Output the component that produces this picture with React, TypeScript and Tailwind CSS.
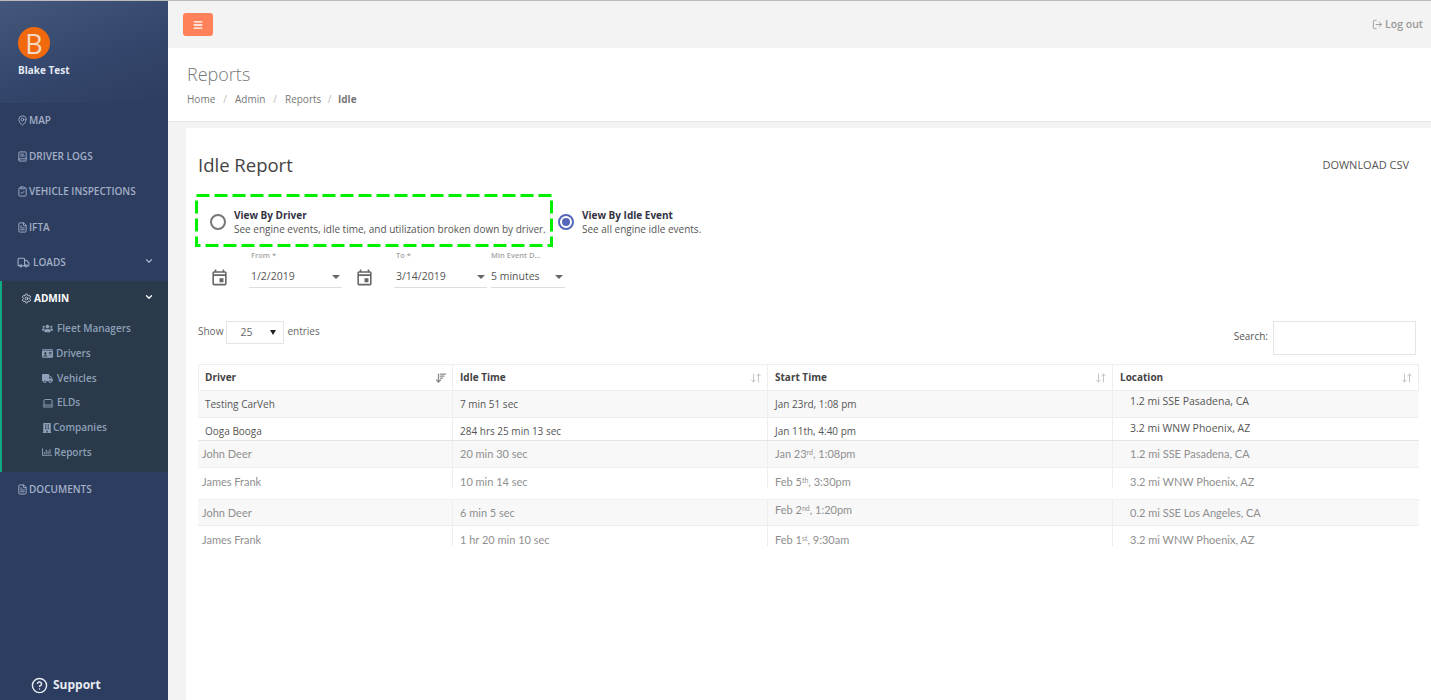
import type { ReactNode } from 'react';
import {
  ArrowDownUp,
  ArrowDownWideNarrow,
  BookText,
  ChevronDown,
  CircleHelp,
  ClipboardCheck,
  FileText,
  Laptop,
  LogOut,
  MapPin,
  Settings,
  Truck,
} from 'lucide-react';
import { FaBars, FaBuilding, FaIdCard, FaRegChartBar, FaTruck, FaUsers } from 'react-icons/fa';
import { MdOutlineEvent } from 'react-icons/md';

const NAV = [
  { label: 'MAP', icon: <MapPin size={11} /> },
  { label: 'DRIVER LOGS', icon: <BookText size={11} /> },
  { label: 'VEHICLE INSPECTIONS', icon: <ClipboardCheck size={11} /> },
  { label: 'IFTA', icon: <FileText size={11} /> },
];

const SUB = [
  { label: 'Fleet Managers', icon: <FaUsers size={11} />, gap: 'gap-[4px]' },
  { label: 'Drivers', icon: <FaIdCard size={11} />, gap: 'gap-[3px]' },
  { label: 'Vehicles', icon: <FaTruck size={11} />, gap: 'gap-[4px]' },
  { label: 'ELDs', icon: <Laptop size={12} />, gap: 'gap-[3px]' },
  { label: 'Companies', icon: <FaBuilding size={10} />, gap: 'gap-[1px]' },
  { label: 'Reports', icon: <FaRegChartBar size={10} />, gap: 'gap-[2px]' },
];

function NavItem({ icon, label, chevron }: { icon: ReactNode; label: string; chevron?: boolean }) {
  return (
    <div className="flex h-[35.5px] items-center gap-[1px] pl-[17px] pr-[14px] text-[10px] font-semibold text-[#a2afc6]">
      {icon}
      <span>{label}</span>
      {chevron && <ChevronDown size={10} strokeWidth={3} className="mb-[4px] ml-auto" />}
    </div>
  );
}

function Sidebar() {
  return (
    <aside className="flex h-full w-[168px] shrink-0 flex-col bg-[#2d3d60]">
      <div className="h-[102px] bg-[linear-gradient(160deg,#43587c_0%,#34466b_55%,#2d3d60_100%)] pl-[18px] pt-[26px]">
        <div className="flex h-[32px] w-[32px] items-center justify-center rounded-full bg-[#f2690d] text-[27px] leading-none text-[#f5d9c3]">
          B
        </div>
        <div className="mt-[4px] text-[10px] font-bold text-[#e3e9f3]">Blake Test</div>
      </div>
      {NAV.map((n) => (
        <NavItem key={n.label} icon={n.icon} label={n.label} />
      ))}
      <NavItem icon={<Truck size={13} className="mr-[2px]" />} label="LOADS" chevron />
      <div className="h-[191px] border-l-2 border-[#12a886] bg-[#2a3a4a]">
        <div className="flex h-[36px] items-center gap-[2px] pl-[19px] pr-[14px] text-[10px] font-bold text-white">
          <Settings size={11} className="text-[#c9d1de]" />
          <span>ADMIN</span>
          <ChevronDown size={10} strokeWidth={3} className="mb-[4px] ml-auto" />
        </div>
        <div>
          {SUB.map((s) => (
            <div
              key={s.label}
              className={`flex h-[24.7px] items-center pl-[40px] text-[10px] font-semibold text-[#8ea0b8] ${s.gap}`}
            >
              {s.icon}
              <span>{s.label}</span>
            </div>
          ))}
        </div>
      </div>
      <NavItem icon={<FileText size={11} />} label="DOCUMENTS" />
      <div className="mt-auto flex items-center gap-[5px] pb-[6px] pl-[31px] text-[12px] font-bold text-[#e6ebf3]">
        <CircleHelp size={17} />
        <span>Support</span>
      </div>
    </aside>
  );
}

function Radio({ checked }: { checked?: boolean }) {
  return (
    <span
      className={`flex h-[16px] w-[16px] shrink-0 items-center justify-center rounded-full border-2 ${
        checked ? 'border-[#5566bb]' : 'border-[#777777]'
      }`}
    >
      {checked && <span className="h-[8px] w-[8px] rounded-full bg-[#5566bb]" />}
    </span>
  );
}

function DateField({ label, value, width, labelPad }: { label: string; value: string; width: string; labelPad: string }) {
  return (
    <div className={`${width} shrink-0`}>
      <div className={`h-[16px] text-[7.5px] font-semibold leading-[6px] text-[#a5a5a5] ${labelPad}`}>{label}</div>
      <div className={`flex h-[20px] items-center justify-between border-b border-[#dddddd] pb-[2px] pr-[2px] text-[10.5px] text-[#555555] ${labelPad}`}>
        <span>{value}</span>
        <span className="h-0 w-0 border-x-[4px] border-t-[4px] border-x-transparent border-t-[#666666]" />
      </div>
    </div>
  );
}

const COLS = 'grid grid-cols-[255px_315px_345px_306px]';

function Sup({ children }: { children: ReactNode }) {
  return <sup className="text-[7px]">{children}</sup>;
}

type Row = {
  cells: ReactNode[];
  height: string;
  tone: string;
  old?: boolean;
  top?: string;
};

const ROWS: Row[] = [
  {
    cells: ['Testing CarVeh', '7 min 51 sec', 'Jan 23rd, 1:08 pm', '1.2 mi SSE Pasadena, CA'],
    height: 'h-[27px]',
    tone: 'bg-[#f8f8f8] border-b border-[#eeeeee]',
  },
  {
    cells: ['Ooga Booga', '284 hrs 25 min 13 sec', 'Jan 11th, 4:40 pm', '3.2 mi WNW Phoenix, AZ'],
    height: 'h-[23px]',
    tone: 'bg-white border-b border-[#e4e4e4]',
  },
  {
    cells: [
      'John Deer',
      '20 min 30 sec',
      <>Jan 23<Sup>rd</Sup>, 1:08pm</>,
      '1.2 mi SSE Pasadena, CA',
    ],
    height: 'h-[27px]',
    tone: 'bg-[#f8f8f8] border-b border-[#eeeeee]',
    old: true,
    top: 'pt-[5px]',
  },
  {
    cells: ['James Frank', '10 min 14 sec', <>Feb 5<Sup>th</Sup>, 3:30pm</>, '3.2 mi WNW Phoenix, AZ'],
    height: 'h-[20px] mb-[11px]',
    tone: 'bg-white',
    old: true,
    top: 'pt-[6px]',
  },
  {
    cells: ['John Deer', '6 min 5 sec', <>Feb 2<Sup>nd</Sup>, 1:20pm</>, '0.2 mi SSE Los Angeles, CA'],
    height: 'h-[27px]',
    tone: 'bg-[#f8f8f8] border-y border-[#eeeeee]',
    old: true,
    top: 'pt-[5px]',
  },
  {
    cells: ['James Frank', '1 hr 20 min 10 sec', <>Feb 1<Sup>st</Sup>, 9:30am</>, '3.2 mi WNW Phoenix, AZ'],
    height: 'h-[20px]',
    tone: 'bg-white',
    old: true,
    top: 'pt-[6px]',
  },
];

function ReportTable() {
  const headers = ['Driver', 'Idle Time', 'Start Time', 'Location'];
  return (
    <div className="w-[1221px]">
      <div className={`${COLS} h-[27px] border-y border-[#eeeeee] text-[10px] font-bold text-[#444444]`}>
        {headers.map((h, i) => (
          <div
            key={h}
            className={`flex items-center justify-between border-r border-[#eeeeee] pr-[5px] first:border-l ${
              i === 0 ? 'pl-[6px]' : 'pl-[7px]'
            }`}
          >
            <span>{h}</span>
            {i === 0 ? (
              <ArrowDownWideNarrow size={12} strokeWidth={2.5} className="text-[#888888]" />
            ) : (
              <ArrowDownUp size={12} className="text-[#c4c4c4]" />
            )}
          </div>
        ))}
      </div>
      {ROWS.map((r, idx) => (
        <div key={idx} className={`${COLS} ${r.height} ${r.tone} overflow-hidden`}>
          {r.cells.map((c, i) => (
            <div
              key={i}
              className={`overflow-hidden border-[#eeeeee] whitespace-nowrap ${i < 3 ? 'border-r' : ''} ${
                r.old
                  ? `${r.top} font-['Lato',sans-serif] text-[11px] text-[#8f8f8f] ${i === 0 ? 'pl-[4px]' : 'pl-[7px]'}`
                  : `pt-[6px] text-[#555555] ${i === 3 ? '-mt-[3px] text-[10.5px]' : 'pl-[7px] text-[10px]'}`
              } ${i === 3 ? 'pl-[17px]' : ''} ${idx === 4 && i === 2 ? '-mt-[3px]' : ''}`}
            >
              <span>{c}</span>
            </div>
          ))}
        </div>
      ))}
    </div>
  );
}

export default function App() {
  return (
    <div className="flex h-[700px] w-[1431px] overflow-hidden border-t border-[#bbbbbb] bg-[#f3f3f3] font-['Open_Sans',sans-serif]">
      <Sidebar />
      <main className="flex min-w-0 flex-1 flex-col">
        <header className="flex h-[47px] shrink-0 items-center justify-between pl-[15px] pr-[8px]">
          <button className="flex h-[23px] w-[30px] items-center justify-center rounded-[3px] bg-[#ff8159] text-white">
            <FaBars size={10} />
          </button>
          <div className="flex items-center gap-[2px] text-[10.5px] font-semibold text-[#999999]">
            <LogOut size={11} />
            <span>Log out</span>
          </div>
        </header>
        <section className="h-[74px] shrink-0 border-b border-[#e7e7e7] bg-white pl-[19px] pt-[13px]">
          <h1 className="text-[18px] leading-[26px] font-light text-[#777777]">Reports</h1>
          <div className="mt-[5px] flex items-center text-[10px] text-[#777777]">
            <span>Home</span>
            <span className="mx-[8px] text-[#bbbbbb]">/</span>
            <span>Admin</span>
            <span className="mx-[8px] text-[#bbbbbb]">/</span>
            <span>Reports</span>
            <span className="mx-[6.5px] text-[#bbbbbb]">/</span>
            <span className="font-bold">Idle</span>
          </div>
        </section>
        <section className="ml-[18px] mt-[6px] min-h-0 flex-1 bg-white pl-[12px] pt-[22px]">
          <div className="flex items-center justify-between pr-[22px]">
            <h2 className="text-[18.5px] leading-[30px] text-[#444444]">Idle Report</h2>
            <span className="pt-[1px] text-[11px] text-[#555555]">DOWNLOAD CSV</span>
          </div>
          <div className="-ml-[3px] mt-[14px] flex items-center">
            <div className="relative flex h-[53px] w-[358px] items-center gap-[8px] pl-[15px] pt-[2px]">
              <svg className="absolute inset-0" width="358" height="53" fill="none">
                <rect x="1.5" y="1.5" width="355" height="50" stroke="#00f000" strokeWidth="3" strokeDasharray="13 5" />
              </svg>
              <Radio />
              <div className="text-[10px] leading-[14px] text-[#555555]">
                <div className="font-bold text-[#333344]">View By Driver</div>
                <div>See engine events, idle time, and utilization broken down by driver.</div>
              </div>
            </div>
            <div className="ml-[5px] flex items-center gap-[8px] pt-[2px]">
              <Radio checked />
              <div className="text-[10px] leading-[14px] text-[#555555]">
                <div className="font-bold text-[#333344]">View By Idle Event</div>
                <div>See all engine idle events.</div>
              </div>
            </div>
          </div>
          <div className="ml-[12px] mt-[5px] flex items-end">
            <MdOutlineEvent size={19} className="mb-[1px] mr-[20px] shrink-0 text-[#666666]" />
            <DateField label="From *" value="1/2/2019" width="w-[93px]" labelPad="pl-[2px]" />
            <MdOutlineEvent size={19} className="mb-[1px] ml-[13px] mr-[20px] shrink-0 text-[#666666]" />
            <DateField label="To *" value="3/14/2019" width="w-[93px]" labelPad="pl-[2px]" />
            <div className="w-[4px]" />
            <DateField label="Min Event D..." value="5 minutes" width="w-[74px]" labelPad="pl-[0px]" />
          </div>
          <div className="mt-[33px] flex items-start justify-between pr-[15px]">
            <div className="flex items-center gap-[3px] text-[10px] text-[#666666]">
              <span className="mb-[2px]">Show</span>
              <div className="flex h-[23px] w-[58px] items-center justify-between border border-[#e5e5e5] pl-[13px] pr-[7px] text-[10.5px]">
                <span>25</span>
                <span className="h-0 w-0 border-x-[3.5px] border-t-[5px] border-x-transparent border-t-[#222222]" />
              </div>
              <span className="mb-[2px]">entries</span>
            </div>
            <div className="flex items-center gap-[5px] text-[10px] text-[#555555]">
              <span className="mb-[3px]">Search:</span>
              <div className="h-[34px] w-[143px] border border-[#e5e5e5] bg-white" />
            </div>
          </div>
          <div className="mt-[9px]">
            <ReportTable />
          </div>
        </section>
      </main>
    </div>
  );
}
